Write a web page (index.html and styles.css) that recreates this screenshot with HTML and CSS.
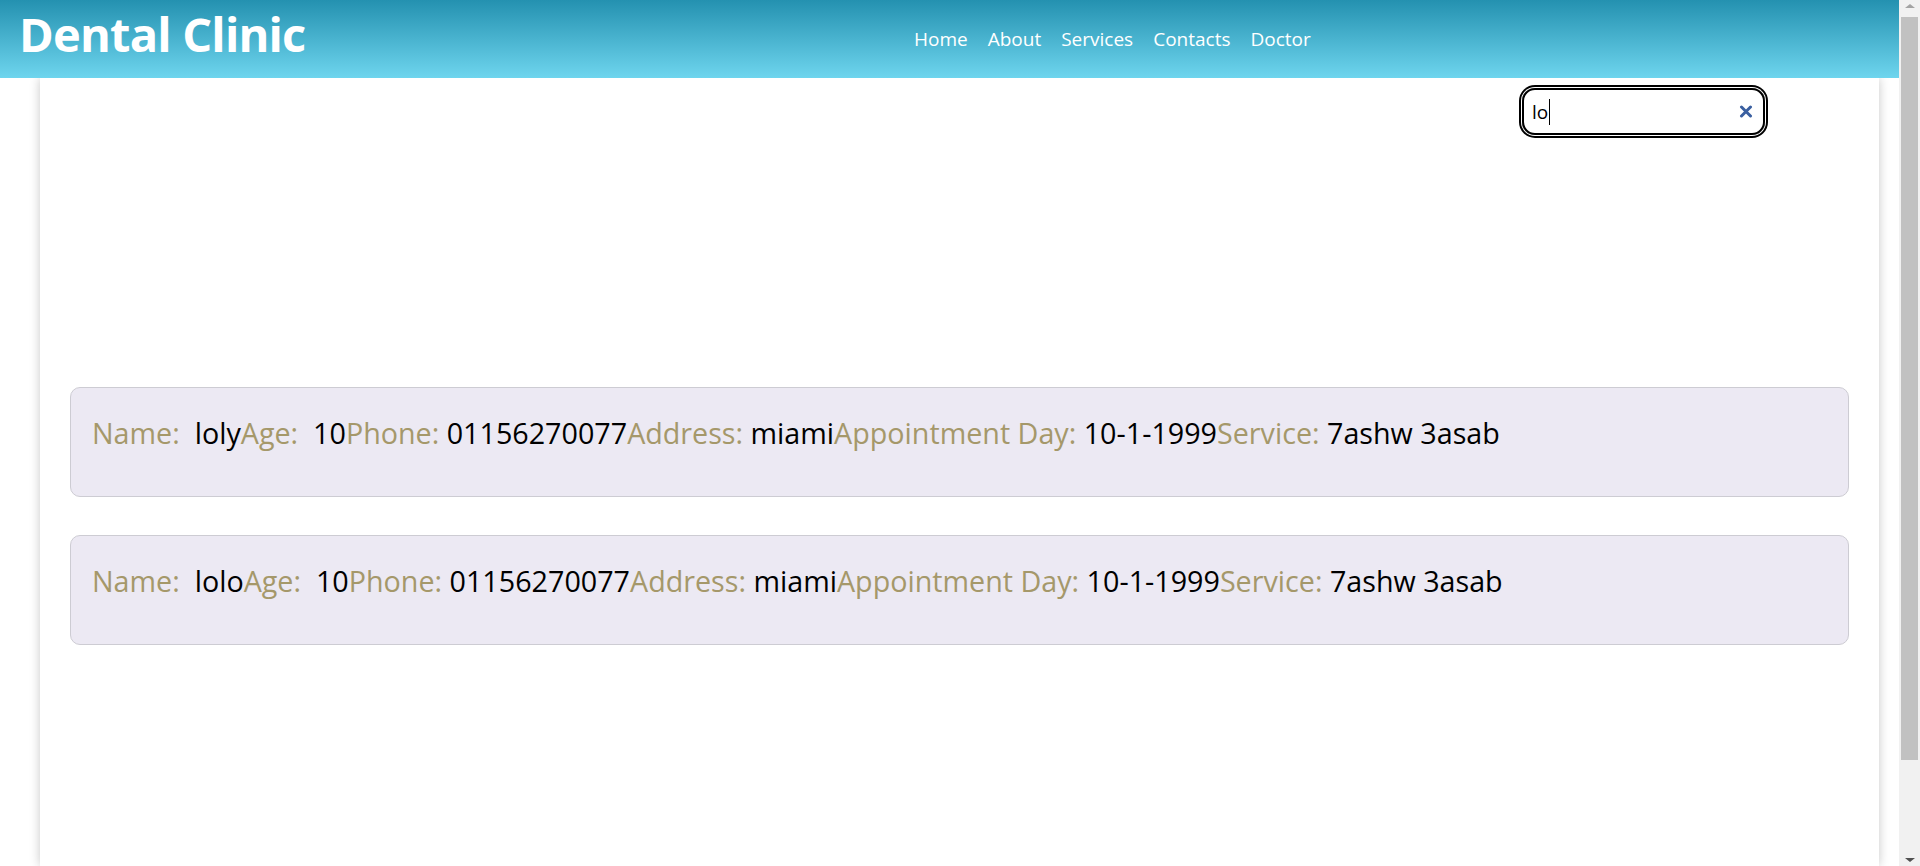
FILE: index.html
```html
<!DOCTYPE html>
<html lang="en">
<head>
<meta charset="utf-8">
<title>Dental Clinic</title>
<link rel="stylesheet" href="styles.css">
</head>
<body>
<div class="page">
  <header class="topbar">
    <h1 class="brand">Dental Clinic</h1>
    <nav class="nav">
      <a href="#">Home</a>
      <a href="#">About</a>
      <a href="#">Services</a>
      <a href="#">Contacts</a>
      <a href="#">Doctor</a>
    </nav>
  </header>
  <main class="sheet">
    <div class="search-row">
      <div class="search">
        <span class="search-text">lo</span><span class="caret"></span>
        <svg class="clear" width="14" height="13" viewBox="0 0 14 13"><path d="M2.5 2 L11.5 11 M11.5 2 L2.5 11" stroke="#3a5fa0" stroke-width="3" stroke-linecap="round"/></svg>
      </div>
    </div>
    <section class="results">
      <div class="card"><p class="line"><span class="lbl">Name: </span><span class="val"> loly</span><span class="lbl">Age: </span><span class="val"> 10</span><span class="lbl">Phone: </span><span class="val">01156270077</span><span class="lbl">Address: </span><span class="val">miami</span><span class="lbl">Appointment Day: </span><span class="val">10-1-1999</span><span class="lbl">Service: </span><span class="val">7ashw 3asab</span></p></div>
      <div class="card"><p class="line"><span class="lbl">Name: </span><span class="val"> lolo</span><span class="lbl">Age: </span><span class="val"> 10</span><span class="lbl">Phone: </span><span class="val">01156270077</span><span class="lbl">Address: </span><span class="val">miami</span><span class="lbl">Appointment Day: </span><span class="val">10-1-1999</span><span class="lbl">Service: </span><span class="val">7ashw 3asab</span></p></div>
    </section>
  </main>
</div>
<div class="scrollbar">
  <div class="sb-btn"><span class="tri-up"></span></div>
  <div class="sb-track"><div class="sb-thumb"></div></div>
  <div class="sb-btn"><span class="tri-down"></span></div>
</div>
</body>
</html>
```
FILE: styles.css
```css
html {
  overflow: hidden;
}
body {
  margin: 0;
  height: 866px;
  display: flex;
  overflow: hidden;
  background: #fff;
  font-family: "Open Sans", "Noto Sans", sans-serif;
}
.page {
  flex: 1;
  display: flex;
  flex-direction: column;
  overflow: hidden;
}
.topbar {
  height: 78px;
  flex: none;
  display: grid;
  grid-template-columns: 895px auto;
  align-items: start;
  padding-left: 19px;
  background: linear-gradient(#2491b0, #6ed5ee);
  z-index: 2;
}
.brand {
  margin: 0;
  padding-top: 2px;
  font-size: 47px;
  font-weight: 700;
  letter-spacing: -0.8px;
  line-height: 64px;
  color: #fff;
}
.nav {
  display: flex;
  gap: 20px;
  margin-top: 26px;
}
.nav a {
  color: #fff;
  text-decoration: none;
  font-size: 19px;
  line-height: 26px;
}
.sheet {
  flex: 1;
  width: 1839px;
  margin-left: 40px;
  box-sizing: border-box;
  padding: 0 30px;
  background: #fff;
  box-shadow: 0 0 10px rgba(0, 0, 0, 0.22);
}
.search-row {
  display: flex;
  justify-content: flex-end;
  padding-top: 10px;
  padding-right: 84px;
}
.search {
  width: 243px;
  height: 47px;
  box-sizing: border-box;
  border: 2px solid #000;
  border-radius: 13px;
  box-shadow: 0 0 0 1px #fff, 0 0 0 3px #000;
  display: flex;
  align-items: center;
  padding: 0 10px 0 8px;
}
.search-text {
  font-size: 19px;
  line-height: 26px;
  color: #000;
}
.caret {
  width: 1px;
  height: 26px;
  background: #000;
  margin-left: 1px;
}
.clear {
  margin-left: auto;
}
.results {
  margin-top: 252px;
  display: flex;
  flex-direction: column;
  gap: 38px;
}
.card {
  height: 110px;
  box-sizing: border-box;
  border: 1px solid #cdccd3;
  border-radius: 10px;
  background: #ece9f3;
  padding: 26px 21px 0;
}
.line {
  margin: 0;
  font-size: 28.7px;
  line-height: 38px;
  white-space: pre;
}
.lbl {
  color: #a5986a;
}
.val {
  color: #000;
}
.scrollbar {
  width: 21px;
  flex: none;
  display: flex;
  flex-direction: column;
  background: #f1f1f1;
}
.sb-btn {
  height: 17px;
  flex: none;
  display: flex;
  align-items: center;
  justify-content: center;
}
.sb-track {
  flex: 1;
  display: flex;
  flex-direction: column;
  padding: 0 2px 89px;
}
.sb-thumb {
  flex: 1;
  background: #c1c1c1;
}
.tri-up {
  width: 0;
  height: 0;
  border-left: 5px solid transparent;
  border-right: 5px solid transparent;
  border-bottom: 4px solid #a3a3a3;
  margin-top: -5px;
}
.tri-down {
  width: 0;
  height: 0;
  border-left: 5px solid transparent;
  border-right: 5px solid transparent;
  border-top: 4px solid #505050;
  margin-top: 4px;
}
```
